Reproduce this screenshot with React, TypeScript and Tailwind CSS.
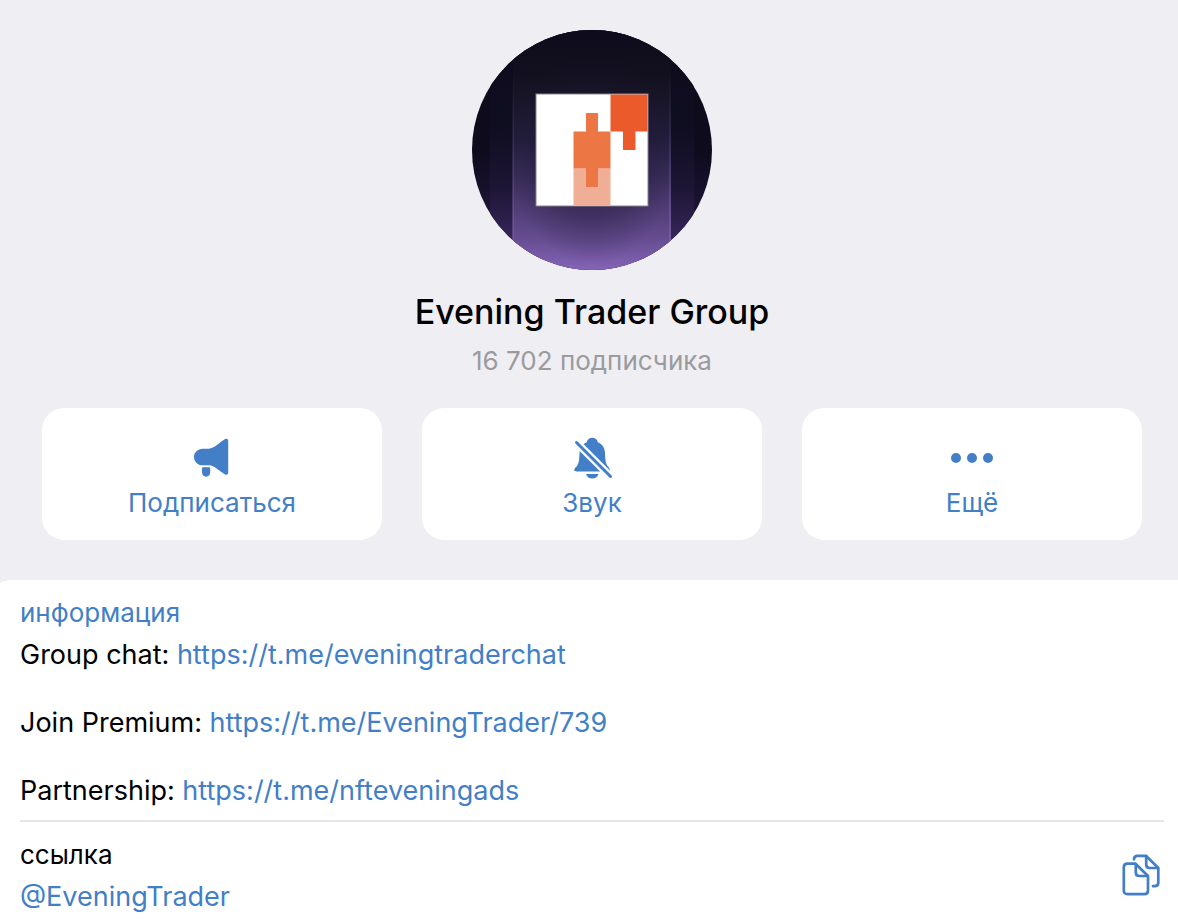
import type { ReactNode } from 'react';

function Avatar() {
  return (
    <svg className="size-60" viewBox="0 0 240 240" role="img" aria-label="Evening Trader Group">
      <defs>
        <clipPath id="round"><circle cx="120" cy="120" r="120" /></clipPath>
        <linearGradient id="side" x1="0" y1="0" x2="0" y2="1">
          <stop offset="0" stopColor="#0d0b1b" />
          <stop offset=".4" stopColor="#0f0d20" />
          <stop offset=".65" stopColor="#1c1534" />
          <stop offset=".88" stopColor="#38265b" />
          <stop offset="1" stopColor="#49336f" />
        </linearGradient>
        <linearGradient id="outer" x1="0" y1="0" x2="0" y2="1">
          <stop offset="0" stopColor="#0d0b1b" />
          <stop offset=".5" stopColor="#0e0b1d" />
          <stop offset=".75" stopColor="#1d1433" />
          <stop offset="1" stopColor="#38265b" />
        </linearGradient>
        <linearGradient id="beam" x1="0" y1="0" x2="0" y2="1">
          <stop offset="0" stopColor="#0d0b1b" />
          <stop offset=".2" stopColor="#13111f" />
          <stop offset=".45" stopColor="#221d3b" />
          <stop offset=".62" stopColor="#3a2e5b" />
          <stop offset=".75" stopColor="#513d77" />
          <stop offset=".87" stopColor="#664d91" />
          <stop offset="1" stopColor="#8464b7" />
        </linearGradient>
        <radialGradient id="shade" cx=".5" cy=".5" r=".5">
          <stop offset="0" stopColor="#1c1733" stopOpacity=".5" />
          <stop offset=".55" stopColor="#1c1733" stopOpacity=".36" />
          <stop offset="1" stopColor="#1c1733" stopOpacity="0" />
        </radialGradient>
        <linearGradient id="edge" x1="0" y1="0" x2="0" y2="1">
          <stop offset=".1" stopColor="#8e72bd" stopOpacity="0" />
          <stop offset="1" stopColor="#8e72bd" stopOpacity=".45" />
        </linearGradient>
      </defs>
      <g clipPath="url(#round)">
        <rect width="240" height="240" fill="url(#outer)" />
        <rect x="18" width="204" height="240" fill="url(#side)" />
        <rect x="41" width="158" height="240" fill="url(#beam)" />
        <ellipse cx="120" cy="130" rx="82" ry="104" fill="url(#shade)" />
        <rect x="40" y="20" width="2" height="220" fill="url(#edge)" />
        <rect x="197" y="20" width="2" height="220" fill="url(#edge)" />
        <rect x="63.5" y="63.5" width="113" height="113" fill="#88828f" />
        <rect x="64.5" y="64.5" width="111" height="111" fill="#fff" />
        <path d="M138.500 64.500H175.500V101.500H163.500V120H151V101.500H138.500Z" fill="#eb5a2a" />
        <path d="M101.500 138.500H138.500V175.500H101.500Z" fill="#f1ae96" />
        <path d="M114 83H126V101.500H138.500V138.500H126V157H114V138.500H101.500V101.500H114Z" fill="#ed7744" />
      </g>
    </svg>
  );
}

function Megaphone() {
  return (
    <svg className="h-14 w-16" viewBox="0 0 64 56" fill="#427fc7" aria-hidden="true">
      <path d="M22.500 18.700H29C34 18.700 40 12 44.800 9.300C46.600 8.300 48.200 9 48.200 11V42.600C48.200 44.700 46.600 45.400 44.800 44.300C40 41.500 34 35.300 29 35.300H22.500C17.800 35.300 14 31.600 14 27S17.800 18.700 22.500 18.700Z" />
      <path d="M23 37.300H29C29.700 37.300 30.200 37.800 30.200 38.500V42C30.200 44.800 28.500 46.700 26.100 46.700S22 44.800 22 42V38.300C22 37.700 22.400 37.300 23 37.300Z" />
    </svg>
  );
}

function BellOff() {
  return (
    <svg className="h-14 w-16" viewBox="0 0 64 56" fill="#427fc7" aria-hidden="true">
      <path d="M26.800 12.200C27.300 9.600 29.400 7.800 32.300 7.800S37.300 9.600 37.800 12.200C42.300 14 44.800 17.800 45 22.800C45.300 29.500 45.300 33.400 48 36.600C50.200 39 50.600 41.500 48 41.500H16.500C13.800 41.500 13.500 39.700 15.300 37.800C19.200 34 19.300 29.800 19.500 23.200C19.700 18 22.200 14 26.800 12.200Z" />
      <path d="M26 44H38.500C37.500 46.900 35.200 48.600 32.200 48.600S27 46.900 26 44Z" />
      <path d="M16.500 12.500L50.500 46.500" stroke="#fff" strokeWidth="7.500" />
      <path d="M16.500 12.500L50.500 46.500" stroke="#427fc7" strokeWidth="3" strokeLinecap="round" />
    </svg>
  );
}

function Dots() {
  return (
    <svg className="h-14 w-16" viewBox="0 0 64 56" fill="#427fc7" aria-hidden="true">
      <circle cx="16" cy="28" r="5" />
      <circle cx="32" cy="28" r="5" />
      <circle cx="48" cy="28" r="5" />
    </svg>
  );
}

function CopyIcon() {
  return (
    <svg className="h-[60px] w-[68px]" viewBox="0 0 68 60" fill="none" stroke="#427fc7" strokeWidth="2.700" strokeLinecap="round" strokeLinejoin="round" aria-hidden="true">
      <path d="M17.500 18.700H25.500L38 31V45.500C38 47.700 36.600 49.200 34.400 49.200H17.500C15.200 49.200 13.800 47.700 13.800 45.500V22.300C13.800 20.100 15.200 18.700 17.500 18.700Z" />
      <path d="M25.800 19V27.500C25.800 29.800 27 31 29.300 31H37.800" />
      <path d="M24 14.300C24 12.100 25.400 10.800 27.600 10.800H36L48.300 23V37.500C48.300 39.700 47 41.200 44.800 41.200H43" />
      <path d="M36.200 11.200V19.500C36.200 21.800 37.400 23 39.700 23H48" />
    </svg>
  );
}

function Action({ icon, label }: { icon: ReactNode; label: string }) {
  return (
    <button type="button" className="flex h-[132px] flex-1 cursor-pointer flex-col items-center rounded-[22px] bg-white pt-[22px] text-[26px] leading-[34px] text-[#427fc7]">
      {icon}
      <span>{label}</span>
    </button>
  );
}

const links = [
  { label: 'Group chat:', url: 'https://t.me/eveningtraderchat' },
  { label: 'Join Premium:', url: 'https://t.me/EveningTrader/739' },
  { label: 'Partnership:', url: 'https://t.me/nfteveningads' },
];

export default function App() {
  return (
    <div className="min-h-screen bg-[#efeef3] font-['Inter','Liberation_Sans',sans-serif] text-black">
      <header className="flex flex-col items-center pt-[30px] pr-9 pb-10 pl-[42px]">
        <Avatar />
        <h1 className="mt-5 text-[34px] leading-[44px] font-medium">Evening Trader Group</h1>
        <p className="mt-2.5 text-[26px] leading-[34px] text-[#9b9b9e]">16 702 подписчика</p>
        <div className="mt-[30px] flex w-full gap-10">
          <Action icon={<Megaphone />} label="Подписаться" />
          <Action icon={<BellOff />} label="Звук" />
          <Action icon={<Dots />} label="Ещё" />
        </div>
      </header>
      <main className="min-h-[344px] rounded-tl-[12px_4px] bg-white pt-4 pl-5">
        <section className="mr-3.5 border-b-2 border-[#e6e6e8] pb-3">
          <h2 className="text-[26px] leading-[34px] text-[#427fc7]">информация</h2>
          <div className="mt-2 flex flex-col gap-[34px] text-[27px] leading-[34px]">
            {links.map(({ label, url }) => (
              <p key={url}>
                {label} <a href={url} className="text-[#427fc7]">{url}</a>
              </p>
            ))}
          </div>
        </section>
        <section className="flex justify-between pt-4">
          <div>
            <h2 className="text-[26px] leading-[34px]">ссылка</h2>
            <a href="https://t.me/EveningTrader" className="mt-2 block text-[27px] leading-[34px] text-[#427fc7]">@EveningTrader</a>
          </div>
          <button type="button" aria-label="Скопировать" className="mt-[7px] h-[60px] cursor-pointer">
            <CopyIcon />
          </button>
        </section>
      </main>
    </div>
  );
}
